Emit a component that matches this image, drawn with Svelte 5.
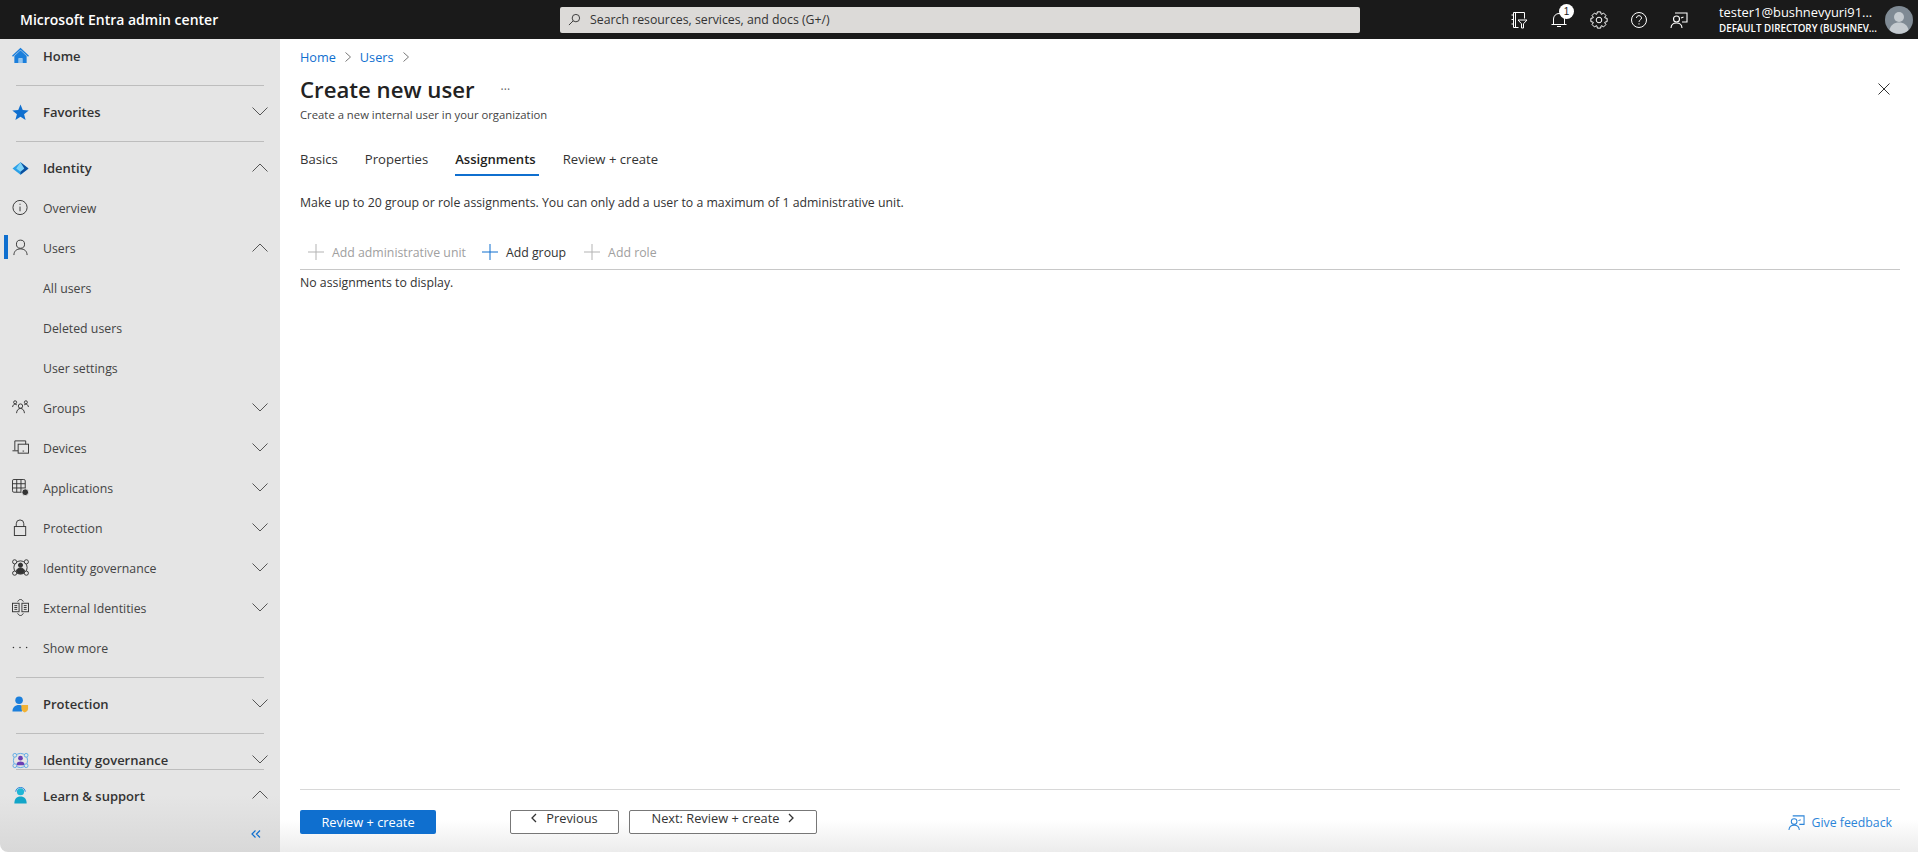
<script>
	const subItems = [
		{ label: 'Overview', icon: 'info' },
		{ label: 'Users', icon: 'user', open: true, active: true },
		{ label: 'All users' },
		{ label: 'Deleted users' },
		{ label: 'User settings' },
		{ label: 'Groups', icon: 'groups', closed: true },
		{ label: 'Devices', icon: 'devices', closed: true },
		{ label: 'Applications', icon: 'apps', closed: true },
		{ label: 'Protection', icon: 'lock', closed: true },
		{ label: 'Identity governance', icon: 'gov', closed: true },
		{ label: 'External Identities', icon: 'external', closed: true },
		{ label: 'Show more', icon: 'more' }
	];

	// eight-tooth outline for the settings cog
	function cogPath() {
		let d = '';
		for (let i = 0; i < 8; i++) {
			const a = (i * Math.PI) / 4;
			const pts = [
				[6.2, a - 0.36],
				[8.3, a - 0.2],
				[8.3, a + 0.2],
				[6.2, a + 0.36]
			];
			for (const [r, t] of pts) {
				const x = (9 + r * Math.cos(t)).toFixed(2);
				const y = (9 + r * Math.sin(t)).toFixed(2);
				d += (d ? 'L' : 'M') + x + ' ' + y;
			}
		}
		return d + 'Z';
	}
</script>

{#snippet chevron(up)}
	<svg class="chev" viewBox="0 0 16 9" fill="none" stroke="#555" stroke-width="1">
		{#if up}<path d="M.5 8.5 8 1l7.5 7.5" />{:else}<path d="M.5.5 8 8 15.5.5" />{/if}
	</svg>
{/snippet}

{#snippet icon(name)}
	<svg class="ico" viewBox="0 0 18 18" fill="none" stroke="#333" stroke-width="1">
		{#if name === 'info'}
			<circle cx="8.500" cy="9" r="7.500" />
			<path d="M8.500 8v5M8.500 5v1.200" />
		{:else if name === 'user'}
			<circle cx="9" cy="5.500" r="4.300" />
			<path d="M2 17c.2-4.300 2.800-6.500 7-6.500s6.800 2.200 7 6.500" />
		{:else if name === 'groups'}
			<circle cx="9" cy="7.500" r="2.300" />
			<circle cx="3.300" cy="3.500" r="1.600" />
			<circle cx="14.700" cy="3.500" r="1.600" />
			<path d="M4.800 15c.3-3.200 1.900-5 4.200-5s3.900 1.800 4.200 5M.6 8.500C.9 6.500 1.900 5.500 3.300 5.500c.8 0 1.400.3 1.900.9M17.400 8.500c-.3-2-1.300-3-2.700-3-.8 0-1.400.3-1.900.9" />
		{:else if name === 'devices'}
			<path d="M3 12V2h11.500v3.500" />
			<path d="M.5 12.500h6" />
			<rect x="6.500" y="5.500" width="11" height="9.500" />
			<path d="M11.200 12.800h1.600" />
		{:else if name === 'apps'}
			<rect x=".5" y=".5" width="13.500" height="13.500" rx="1.500" />
			<path d="M.5 5h13.500M.5 9.500h13.500M5 .5v13.500M9.500 .5v13.500" />
			<circle cx="14" cy="14" r="3.600" fill="#333" stroke="#e5e5e5" />
		{:else if name === 'lock'}
			<rect x="2.500" y="8" width="12" height="9.500" />
			<path d="M4.500 8V5a4 4 0 0 1 8 0v3" />
		{:else if name === 'gov'}
			<circle cx="9" cy="9" r="7" />
			<circle cx="9" cy="6.500" r="2.200" fill="#333" />
			<path d="M4.500 13.500c.4-2.800 2-4 4.500-4s4.100 1.200 4.500 4c-1 1.200-2.500 2-4.500 2s-3.500-.8-4.500-2z" fill="#333" />
			<circle cx="2.800" cy="3" r="2.200" fill="#e5e5e5" />
			<circle cx="15.200" cy="3" r="2.200" fill="#e5e5e5" />
			<circle cx="2.800" cy="15" r="2.200" fill="#e5e5e5" />
			<circle cx="15.200" cy="15" r="2.200" fill="#e5e5e5" />
		{:else if name === 'external'}
			<rect x=".5" y="4.500" width="7" height="9" />
			<rect x="10.500" y="4.500" width="7" height="9" />
			<path d="M2.500 7h3M2.500 9h3M2.500 11h3M12.500 7h3M12.500 9h3M12.500 11h3" />
			<path d="M6 2.800C6.800 1.300 7.800.5 9 .5s2.200.8 3 2.300M6 15.200c.8 1.500 1.800 2.300 3 2.300s2.200-.8 3-2.300" />
		{:else if name === 'more'}
			<circle cx="1.500" cy="9" r=".8" fill="#333" stroke="none" />
			<circle cx="8.500" cy="9" r=".8" fill="#333" stroke="none" />
			<circle cx="15.500" cy="9" r=".8" fill="#333" stroke="none" />
		{/if}
	</svg>
{/snippet}

{#snippet feedbackIcon(color)}
	<svg class="ico" viewBox="0 0 18 18" fill="none" stroke={color} stroke-width="1.100">
		<circle cx="6.500" cy="8" r="3" />
		<path d="M1 17c.2-3.300 2.300-5 5.500-5s5.300 1.700 5.500 5" />
		<path d="M5 2h12v9h-5" />
		<path d="m11 7 2.500-1" />
	</svg>
{/snippet}

<div class="page">
	<header class="topbar">
		<div class="brand">Microsoft Entra admin center</div>
		<div class="search">
			<svg viewBox="0 0 14 14" fill="none" stroke="#333" stroke-width="1">
				<circle cx="8.500" cy="5.500" r="4" />
				<path d="M5.500 8.500 1 13" />
			</svg>
			<span>Search resources, services, and docs (G+/)</span>
		</div>
		<div class="top-icons">
			<button aria-label="Portal filter">
				<svg viewBox="0 0 18 18" fill="none" stroke="#fff" stroke-width="1">
					<path d="M3.500 1.500h11v6M3.500 1.500v15h5M5.500 1.500v15M1.500 4h2M1.500 8.500h2M1.500 13h2" />
					<path d="M8 9h9l-3.500 3.800V17h-2v-4.200z" />
				</svg>
			</button>
			<button aria-label="Notifications">
				<svg viewBox="0 0 18 18" fill="none" stroke="#fff" stroke-width="1">
					<path d="M3.500 13.500V8a5.500 5.500 0 0 1 11 0v5.500zM1.500 13.500h15M7 15.500h4" />
				</svg>
				<span class="badge">1</span>
			</button>
			<button aria-label="Settings">
				<svg viewBox="0 0 18 18" fill="none" stroke="#fff" stroke-width="1">
					<circle cx="9" cy="9" r="2.800" />
					<path d={cogPath()} />
				</svg>
			</button>
			<button aria-label="Help">
				<svg viewBox="0 0 18 18" fill="none" stroke="#fff" stroke-width="1">
					<circle cx="9" cy="9" r="7.500" />
					<path d="M6.500 7C6.500 5.500 7.600 4.700 9 4.700s2.500.9 2.500 2.200c0 2-2.500 2-2.500 4M9 12.300v1.200" />
				</svg>
			</button>
			<button aria-label="Feedback">
				{@render feedbackIcon('#fff')}
			</button>
		</div>
		<div class="account">
			<div class="account-text">
				<div class="email">tester1@bushnevyuri91...</div>
				<div class="dir">DEFAULT DIRECTORY (BUSHNEV...</div>
			</div>
			<div class="avatar">
				<svg viewBox="0 0 28 28">
					<circle cx="14" cy="14" r="14" fill="#7f8a94" />
					<circle cx="14" cy="11" r="5" fill="#c5cbd0" />
					<path d="M4.500 24c1-5 4.500-7.500 9.500-7.500s8.500 2.500 9.500 7.500a14 14 0 0 1-19 0z" fill="#c5cbd0" />
				</svg>
			</div>
		</div>
	</header>

	<div class="body">
		<aside class="sidebar">
			<div class="nav-scroll">
				<div class="head-row home">
					<svg class="ico big" viewBox="0 0 18 18">
						<path d="M9 .8 0 9.300l1 1 8-7.500 8 7.500 1-1z" fill="#1b7fdc" />
						<path d="M9 3.500 2.500 9.500V17H7v-5h4v5h4.500V9.500z" fill="#1b7fdc" />
						<rect x="7" y="12" width="4" height="5" fill="#8fc3f0" />
					</svg>
					<span>Home</span>
				</div>
				<div class="rule"></div>
				<div class="head-row">
					<svg class="ico big" viewBox="0 0 18 18">
						<path d="m9 .5 2.400 5.900 6.300.4-4.900 4 1.600 6.200L9 13.600l-5.400 3.400 1.600-6.200-4.900-4 6.300-.4z" fill="#0f6fcf" />
					</svg>
					<span>Favorites</span>
					{@render chevron(false)}
				</div>
				<div class="rule"></div>
				<div class="head-row">
					<svg class="ico big" viewBox="0 0 18 18">
						<path d="M9 2.500.5 9 9 15.500 17.500 9z" fill="#2aa0e8" />
						<path d="M9 2.500 17.500 9 9 15.500z" fill="#0c4f9e" />
						<path d="M9 2.500 4.500 9 9 12.500 13 9z" fill="#7fd3f7" />
					</svg>
					<span>Identity</span>
					{@render chevron(true)}
				</div>
				{#each subItems as item}
					<div class="sub-row">
						{#if item.active}<span class="marker"></span>{/if}
						<span class="ico-slot">
							{#if item.icon}{@render icon(item.icon)}{/if}
						</span>
						<span class="label">{item.label}</span>
						{#if item.open}{@render chevron(true)}{/if}
						{#if item.closed}{@render chevron(false)}{/if}
					</div>
				{/each}
				<div class="rule"></div>
				<div class="head-row">
					<svg class="ico big" viewBox="0 0 18 18">
						<circle cx="7.500" cy="4.500" r="4" fill="#1b7fdc" />
						<path d="M.5 16.500c0-4.500 2.500-7 7-7 1.500 0 2.500.3 3 .8v6.200z" fill="#1b7fdc" />
						<path d="M10 9.500h7v4c0 1.800-1.400 3-3.500 4-2.100-1-3.500-2.200-3.500-4z" fill="#f2b233" />
					</svg>
					<span>Protection</span>
					{@render chevron(false)}
				</div>
				<div class="rule"></div>
				<div class="head-row">
					<svg class="ico big" viewBox="0 0 18 18" fill="none">
						<circle cx="9" cy="9" r="7.500" stroke="#5aa9e6" />
						<circle cx="9" cy="6.500" r="2.500" fill="#6a3fb5" />
						<path d="M4.500 14c.4-3 2-4 4.500-4s4.100 1 4.500 4z" fill="#6a3fb5" />
						<circle cx="3" cy="3.500" r="2" stroke="#5aa9e6" fill="#e5e5e5" />
						<circle cx="15" cy="3.500" r="2" stroke="#5aa9e6" fill="#e5e5e5" />
						<circle cx="3" cy="14.500" r="2" stroke="#5aa9e6" fill="#e5e5e5" />
						<circle cx="15" cy="14.500" r="2" stroke="#5aa9e6" fill="#e5e5e5" />
					</svg>
					<span>Identity governance</span>
					{@render chevron(false)}
				</div>
			</div>
			<div class="nav-foot">
				<div class="rule flush"></div>
				<div class="head-row learn">
					<svg class="ico big" viewBox="0 0 18 18">
						<circle cx="9" cy="5" r="3.800" fill="#1fb6d6" />
						<path d="M4 5C4 2.200 6.200.5 9 .5s5 1.700 5 4.500" fill="none" stroke="#1b7fdc" />
						<path d="M2.500 17.500c0-4.800 2.300-7.500 6.500-7.500s6.500 2.700 6.500 7.500z" fill="#12a5c8" />
					</svg>
					<span>Learn &amp; support</span>
					{@render chevron(true)}
				</div>
				<div class="collapse">
					<svg viewBox="0 0 10 8" fill="none" stroke="#0f6fcf" stroke-width="1.200">
						<path d="M4.500.5 1 4l3.500 3.500M9 .5 5.500 4 9 7.500" />
					</svg>
				</div>
			</div>
		</aside>

		<main class="main">
			<nav class="crumbs">
				<a href="#home">Home</a>
				<svg viewBox="0 0 6 10" fill="none" stroke="#777"><path d="m.5.5 5 4.500-5 4.500" /></svg>
				<a href="#users">Users</a>
				<svg viewBox="0 0 6 10" fill="none" stroke="#777"><path d="m.5.5 5 4.500-5 4.500" /></svg>
			</nav>
			<div class="title-row">
				<h1>Create new user</h1>
				<span class="dots">···</span>
				<svg class="close" viewBox="0 0 12 12" fill="none" stroke="#333"><path d="m.5.5 11 11M11.500.5l-11 11" /></svg>
			</div>
			<p class="subtitle">Create a new internal user in your organization</p>

			<div class="tabs">
				<span>Basics</span>
				<span>Properties</span>
				<span class="current">Assignments</span>
				<span>Review + create</span>
			</div>

			<p class="note">Make up to 20 group or role assignments. You can only add a user to a maximum of 1 administrative unit.</p>

			<div class="toolbar">
				<span class="tool off"><svg viewBox="0 0 16 16" fill="none" stroke="#b3b3b3"><path d="M8 0v16M0 8h16" /></svg>Add administrative unit</span>
				<span class="tool"><svg viewBox="0 0 16 16" fill="none" stroke="#0f6fcf"><path d="M8 0v16M0 8h16" /></svg>Add group</span>
				<span class="tool off"><svg viewBox="0 0 16 16" fill="none" stroke="#b3b3b3"><path d="M8 0v16M0 8h16" /></svg>Add role</span>
			</div>
			<p class="empty">No assignments to display.</p>

			<footer class="actions">
				<button class="primary">Review + create</button>
				<button class="outline prev">
					<svg viewBox="0 0 6 10" fill="none" stroke="#333" stroke-width="1.300"><path d="M5 1 1 5l4 4" /></svg>
					Previous
				</button>
				<button class="outline">
					Next: Review + create
					<svg viewBox="0 0 6 10" fill="none" stroke="#333" stroke-width="1.300"><path d="m1 1 4 4-4 4" /></svg>
				</button>
				<a class="feedback" href="#feedback">{@render feedbackIcon('#2b84d8')}Give feedback</a>
			</footer>
		</main>
	</div>
</div>

<style>
	:global(body) {
		font-family: 'Open Sans', 'Noto Sans', sans-serif;
		color: #333;
		background: #fff;
	}

	.page {
		display: flex;
		flex-direction: column;
		height: 852px;
		overflow: hidden;
	}

	/* top bar */
	.topbar {
		flex: 0 0 39px;
		display: flex;
		align-items: center;
		background: #1a1a1a;
		color: #fff;
	}
	.brand {
		width: 560px;
		padding-left: 20px;
		box-sizing: border-box;
		font-size: 14px;
		font-weight: 600;
	}
	.search {
		width: 800px;
		height: 26px;
		box-sizing: border-box;
		display: flex;
		align-items: center;
		gap: 9px;
		padding-left: 8px;
		background: #dcdad8;
		border-radius: 2px;
		color: #333;
		font-size: 12.300px;
	}
	.search svg {
		width: 13px;
		height: 13px;
	}
	.top-icons {
		display: flex;
		margin-left: 150px;
		gap: 22px;
	}
	.top-icons button {
		position: relative;
		width: 18px;
		height: 18px;
		padding: 0;
		border: 0;
		background: none;
	}
	.top-icons svg {
		display: block;
		width: 18px;
		height: 18px;
	}
	.badge {
		position: absolute;
		top: -7px;
		left: 9px;
		width: 15px;
		height: 15px;
		border-radius: 50%;
		background: #fff;
		color: #1a1a1a;
		font-size: 10px;
		line-height: 15px;
		text-align: center;
	}
	.account {
		display: flex;
		align-items: center;
		margin-left: 31px;
		gap: 10px;
	}
	.account-text {
		width: 156px;
	}
	.email {
		font-size: 12.900px;
		line-height: 16px;
		white-space: nowrap;
	}
	.dir {
		margin-top: 2px;
		font-size: 9.800px;
		font-weight: 600;
		line-height: 13px;
		white-space: nowrap;
	}
	.avatar svg {
		display: block;
		width: 28px;
		height: 28px;
	}

	.body {
		flex: 1;
		display: flex;
		min-height: 0;
	}

	/* sidebar */
	.sidebar {
		flex: 0 0 280px;
		display: flex;
		flex-direction: column;
		background: linear-gradient(#e5e5e5 93%, #d8d8d8);
		border-bottom-left-radius: 8px;
		font-size: 12.300px;
	}
	.nav-scroll {
		height: 730px;
		overflow: hidden;
		flex: none;
	}
	.nav-foot {
		flex: 1;
	}
	.head-row {
		display: flex;
		align-items: center;
		height: 40px;
		padding: 0 12px;
		margin-top: 7px;
		font-size: 13px;
		font-weight: 600;
		color: #333;
	}
	.head-row.home {
		margin-top: -3px;
		margin-bottom: 9px;
	}
	.head-row.learn {
		margin-top: 6px;
	}
	.head-row > span,
	.label {
		margin-left: 14px;
		padding-bottom: 2px;
		flex: 1;
	}
	.head-row.home > span,
	.head-row.learn > span {
		padding-bottom: 0;
	}
	.ico {
		display: block;
		flex: none;
		width: 17px;
		height: 17px;
	}
	.ico.big {
		margin-top: -2px;
	}
	.chev {
		flex: none;
		width: 16px;
		height: 9px;
		margin-top: -4px;
	}
	.rule {
		height: 1px;
		background: #bdbdbd;
		margin: 8px 16px 0;
	}
	.rule.flush {
		margin-top: 0;
	}
	.sub-row {
		position: relative;
		display: flex;
		align-items: center;
		height: 40px;
		padding: 0 12px;
		color: #444;
	}
	.ico-slot {
		flex: none;
		width: 17px;
		height: 17px;
		margin-top: -4px;
	}
	.marker {
		position: absolute;
		left: 4px;
		top: 6px;
		width: 4px;
		height: 24px;
		background: #0f6fcf;
	}
	.collapse {
		display: flex;
		justify-content: flex-end;
		padding: 14px 19px 0 0;
	}
	.collapse svg {
		width: 10px;
		height: 8px;
	}

	/* main */
	.main {
		flex: 1;
		display: flex;
		flex-direction: column;
		padding: 0 18px 0 20px;
		background: linear-gradient(#fff 96%, #ececec);
		font-size: 12.300px;
		min-width: 0;
	}
	.crumbs {
		display: flex;
		align-items: center;
		gap: 9px;
		height: 18px;
		margin-top: 9px;
		font-size: 12.700px;
	}
	.crumbs a {
		color: #0f6fcf;
		text-decoration: none;
	}
	.crumbs svg {
		width: 6px;
		height: 10px;
	}
	.title-row {
		display: flex;
		align-items: center;
		margin-top: 7px;
		height: 32px;
	}
	h1 {
		margin: 0;
		font-size: 22.200px;
		font-weight: 600;
		color: #222;
	}
	.dots {
		margin-left: 26px;
		color: #666;
		font-size: 12px;
		flex: 1;
	}
	.close {
		width: 12px;
		height: 12px;
		margin-right: 10px;
	}
	.subtitle {
		margin: 2px 0 0;
		font-size: 11.300px;
		line-height: 16px;
		color: #444;
	}
	.tabs {
		display: flex;
		gap: 27px;
		margin-top: 26px;
		height: 30px;
		font-size: 13.100px;
		line-height: 20px;
	}
	.tabs .current {
		position: relative;
		font-weight: 600;
		color: #222;
	}
	.tabs .current::after {
		content: '';
		position: absolute;
		left: 0;
		right: -3px;
		top: 25px;
		height: 2px;
		background: #0f6fcf;
	}
	.note {
		margin: 15px 0 0;
		line-height: 18px;
	}
	.toolbar {
		display: flex;
		align-items: center;
		margin-top: 23px;
		height: 34px;
		padding: 0 8px;
		gap: 16px;
		border-bottom: 1px solid #c8c8c8;
	}
	.tool {
		display: flex;
		align-items: center;
		gap: 8px;
	}
	.tool:last-child {
		margin-left: 2px;
	}
	.tool svg {
		width: 16px;
		height: 16px;
	}
	.tool.off {
		color: #a0a0a0;
	}
	.empty {
		margin: 4px 0 0;
		line-height: 18px;
	}
	.actions {
		margin-top: auto;
		margin-bottom: 18px;
		display: flex;
		align-items: flex-start;
		border-top: 1px solid #d8d8d8;
		padding-top: 20px;
	}
	.actions button {
		height: 24px;
		box-sizing: border-box;
		border-radius: 2px;
		font: inherit;
		font-size: 12.800px;
		padding: 0;
	}
	.primary {
		width: 136px;
		background: #0f6fcf;
		border: 0;
		color: #fff;
	}
	.outline {
		display: flex;
		justify-content: center;
		align-items: center;
		gap: 9px;
		background: #fff;
		border: 1px solid #777;
		color: #333;
		width: 188px;
		margin-left: 10px;
	}
	.actions .outline {
		padding-bottom: 8px;
	}
	.outline.prev {
		width: 109px;
		margin-left: 74px;
	}
	.outline svg {
		width: 6px;
		height: 10px;
	}
	.feedback {
		margin-left: auto;
		margin-right: 8px;
		display: flex;
		align-items: center;
		gap: 7px;
		height: 24px;
		color: #2b84d8;
		text-decoration: none;
	}
</style>
